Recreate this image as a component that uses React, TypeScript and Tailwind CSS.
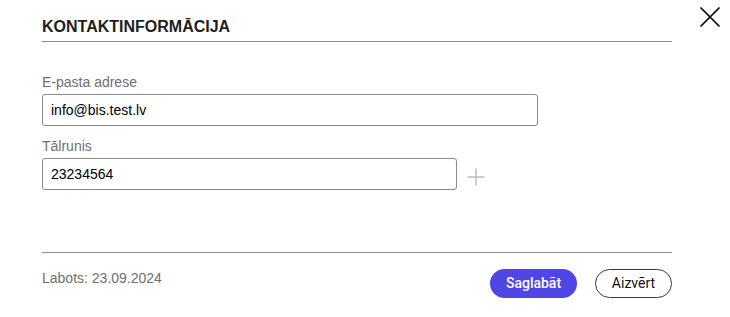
const arial = { fontFamily: '"Liberation Sans", Arial, sans-serif' };

export default function App() {
  return (
    <div className="relative w-[730px] h-[317px] bg-white font-['Liberation_Sans',Arial,sans-serif]">
      {/* close */}
      <button className="absolute left-[699px] top-[6px] w-[22px] h-[22px] text-black">
        <svg width="22" height="22" viewBox="0 0 22 22" fill="none" stroke="currentColor" strokeWidth="1.7">
          <path d="M1.5 1.5 L20.5 20.5 M20.5 1.5 L1.5 20.5" />
        </svg>
      </button>

      <div className="ml-[42px] w-[630px] pt-[17px]">
        <div className="pb-[4px] border-b border-[#8c8c8c]">
          <h2 className="text-[16px] leading-[20px] font-bold text-[#1e1e1e]">KONTAKTINFORMĀCIJA</h2>
        </div>

        <div className="mt-[30px]">
          <label className="block text-[14px] leading-[20px] text-[#6f6f6f]">E-pasta adrese</label>
          <input
            className="mt-[2px] block w-[496px] h-[32px] px-[8px] border border-[#8a8a8a] rounded-[3px] text-[14px] text-black outline-none"
            style={arial}
            defaultValue="info@bis.test.lv"
          />
        </div>

        <div className="mt-[10px]">
          <label className="block text-[14px] leading-[20px] text-[#6f6f6f]">Tālrunis</label>
          <div className="mt-[2px] flex items-center">
            <input
              className="block w-[415px] h-[32px] px-[8px] border border-[#8a8a8a] rounded-[3px] text-[14px] text-black outline-none"
              style={arial}
              defaultValue="23234564"
            />
            <button className="ml-[10px] mt-[5px] w-[18px] h-[18px] text-[#bdbdbd]">
              <svg width="18" height="18" viewBox="0 0 18 18" fill="none" stroke="currentColor" strokeWidth="1.5">
                <path d="M9 0.5 V17.5 M0.5 9 H17.5" />
              </svg>
            </button>
          </div>
        </div>

        <div className="mt-[62px] border-t border-[#8c8c8c] pt-[15px] flex items-start justify-between">
          <span className="text-[14px] leading-[20px] text-[#6f6f6f]">Labots: 23.09.2024</span>
          <div className="flex items-center gap-[18px] mt-[1px] font-['Roboto',sans-serif]">
            <button className="w-[87px] h-[29px] rounded-full bg-[#5046e6] text-white text-[14px] font-medium">
              Saglabāt
            </button>
            <button className="w-[77px] h-[29px] rounded-full border border-[#3a3a3a] bg-white text-[#111] text-[14px]">
              Aizvērt
            </button>
          </div>
        </div>
      </div>
    </div>
  );
}
